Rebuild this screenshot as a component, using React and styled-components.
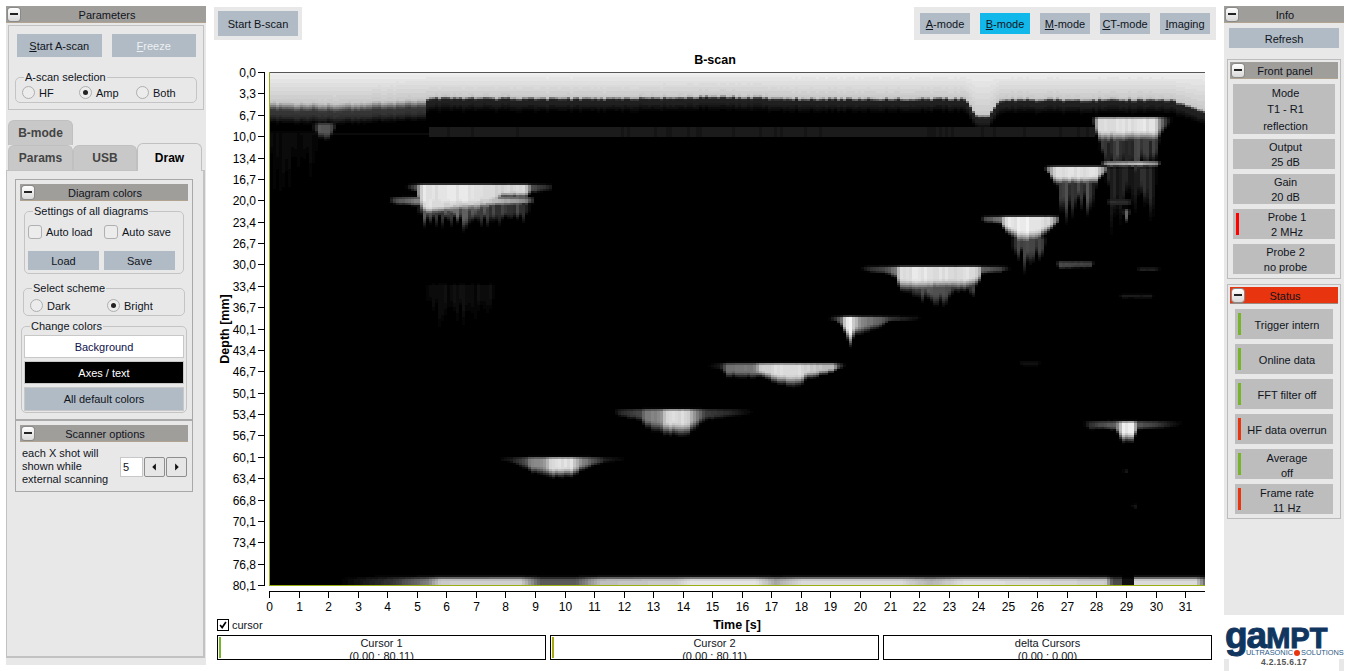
import React from 'react';
import styled, { createGlobalStyle } from 'styled-components';

// ---- plot geometry, in page pixels (the svg viewBox uses the same numbers)
const PLOT = { left: 269, right: 1205, top: 72, bottom: 585 };
const X_STEP = 29.55;
const DEPTHS = ['0,0', '3,3', '6,7', '10,0', '13,4', '16,7', '20,0', '23,4', '26,7', '30,0', '33,4', '36,7', '40,1', '43,4', '46,7', '50,1', '53,4', '56,7', '60,1', '63,4', '66,8', '70,1', '73,4', '76,8', '80,1'];
const SECONDS = Array.from({ length: 32 }, (_, i) => i);

// ---- echoes of the b-scan: top edge, then [x, brightness, depth] along the echo, rough = streaky columns
const ECHOES = [
  { top: 185, pts: [[405, 0, 2], [415, 0.3, 5], [422, 0.92, 24], [470, 0.92, 24], [495, 0.85, 18], [500, 0.85, 10], [525, 0.85, 10], [532, 0.3, 6], [550, 0.12, 4], [552, 0, 2]] },
  { top: 198, pts: [[388, 0, 3], [395, 0.3, 5], [420, 0.55, 6], [425, 0.9, 14], [490, 0.8, 6], [525, 0.55, 5], [532, 0.2, 4], [535, 0, 2]] },
  { top: 205, rough: 0.7, pts: [[415, 0, 5], [425, 0.4, 14], [460, 0.45, 15], [495, 0.3, 13], [525, 0.3, 10], [530, 0, 5]] },
  { top: 458, pts: [[498, 0, 2], [510, 0.1, 3], [525, 0.3, 8], [530, 0.55, 11], [545, 0.6, 14], [550, 0.9, 15], [572, 0.9, 15], [580, 0.6, 10], [592, 0.35, 6], [605, 0.12, 3], [625, 0, 2]] },
  { top: 410, pts: [[613, 0, 3], [620, 0.15, 5], [640, 0.3, 8], [645, 0.5, 14], [660, 0.55, 18], [665, 0.88, 20], [688, 0.88, 20], [695, 0.55, 14], [705, 0.25, 8], [730, 0.15, 5], [753, 0, 3]] },
  { top: 364, pts: [[707, 0, 3], [720, 0.1, 4], [727, 0.45, 10], [755, 0.5, 11], [760, 0.85, 9], [778, 0.9, 16], [800, 0.9, 18], [806, 0.85, 12], [833, 0.75, 6], [838, 0.3, 4], [845, 0, 2]] },
  { top: 317, pts: [[828, 0, 2], [835, 0.2, 3], [842, 0.5, 8], [845, 0.95, 14], [850, 1, 24], [854, 0.8, 14], [860, 0.55, 13], [880, 0.4, 8], [890, 0.2, 3], [917, 0.05, 2], [920, 0, 1]] },
  { top: 267, pts: [[860, 0, 2], [870, 0.2, 4], [885, 0.3, 5], [895, 0.5, 8], [900, 0.92, 20], [970, 0.9, 18], [978, 0.85, 14], [982, 0.4, 5], [1000, 0.25, 4], [1010, 0, 2]] },
  { top: 282, rough: 0.4, pts: [[905, 0, 5], [915, 0.3, 12], [935, 0.4, 16], [945, 0.4, 16], [955, 0.25, 8], [968, 0.15, 6], [972, 0.35, 12], [976, 0, 4]] },
  { top: 118, pts: [[1092, 0, 3], [1098, 0.9, 20], [1155, 0.92, 20], [1160, 0.5, 14], [1168, 0.1, 6], [1172, 0, 2]] },
  { top: 138, rough: 0.9, pts: [[1098, 0, 5], [1103, 0.35, 24], [1155, 0.35, 24], [1160, 0, 4]] },
  { top: 162, pts: [[1100, 0, 2], [1106, 0.6, 3], [1125, 0.7, 3], [1140, 0.8, 3], [1157, 0.55, 3], [1160, 0, 2]] },
  { top: 168, rough: 1, pts: [[1104, 0, 6], [1110, 0.22, 40], [1150, 0.22, 40], [1158, 0, 5]] },
  { top: 167, pts: [[1044, 0, 2], [1048, 0.5, 5], [1055, 0.9, 14], [1095, 0.92, 14], [1104, 0.6, 5], [1107, 0, 3]] },
  { top: 180, rough: 0.8, pts: [[1055, 0, 3], [1060, 0.35, 24], [1090, 0.35, 24], [1098, 0, 3]] },
  { top: 217, pts: [[980, 0, 2], [985, 0.3, 4], [1000, 0.5, 5], [1005, 0.9, 12], [1020, 0.95, 22], [1035, 0.95, 22], [1050, 0.85, 10], [1057, 0.4, 5], [1060, 0, 2]] },
  { top: 238, rough: 0.8, pts: [[1010, 0, 3], [1015, 0.35, 20], [1040, 0.35, 20], [1048, 0, 3]] },
  { top: 262, pts: [[1055, 0, 2], [1060, 0.3, 5], [1090, 0.25, 4], [1094, 0, 2]] },
  { top: 210, pts: [[1122, 0, 2], [1126, 0.4, 10], [1130, 0, 2]] },
  { top: 200, pts: [[1105, 0, 2], [1110, 0.18, 4], [1128, 0.18, 4], [1132, 0, 2]] },
  { top: 268, pts: [[1135, 0, 1], [1140, 0.12, 2], [1155, 0.12, 2], [1160, 0, 1]] },
  { top: 295, pts: [[1118, 0, 1], [1122, 0.1, 2], [1150, 0.1, 2], [1154, 0, 1]] },
  { top: 362, pts: [[1018, 0, 1], [1022, 0.07, 3], [1036, 0.07, 3], [1040, 0, 1]] },
  { top: 505, pts: [[1131, 0, 1], [1134, 0.12, 3], [1138, 0, 1]] },
  { top: 470, pts: [[1122, 0, 1], [1126, 0.08, 2], [1129, 0, 1]] },
  { top: 422, pts: [[1083, 0, 3], [1090, 0.2, 6], [1100, 0.3, 5], [1115, 0.4, 6], [1122, 0.95, 16], [1132, 0.95, 16], [1138, 0.35, 6], [1155, 0.25, 5], [1170, 0.1, 4], [1183, 0, 2]] },
  { top: 285, rough: 0.9, pts: [[425, 0, 5], [430, 0.07, 24], [490, 0.06, 24], [495, 0, 5]] },
  { top: 132, rough: 0.9, pts: [[270, 0.045, 38], [315, 0.045, 38], [320, 0, 5]] },
  { top: 124, rough: 0.6, pts: [[312, 0, 5], [318, 0.35, 14], [325, 0.42, 18], [332, 0.3, 8], [336, 0, 5]] },
];

const TOP_EDGE = [[269, 100], [345, 101], [380, 99], [425, 97], [430, 95], [600, 96], [720, 94], [800, 96], [965, 96], [975, 113], [988, 113], [1000, 97], [1170, 97], [1190, 104], [1205, 110]];
const BOTTOM_BAND = [[340, 0], [390, 0.2], [427, 0.5], [440, 0.8], [520, 0.82], [540, 0.35], [575, 0.35], [600, 0.75], [677, 0.8], [690, 0.9], [755, 0.9], [775, 0.65], [800, 0.85], [900, 0.85], [930, 0.7], [965, 0.88], [1040, 0.85], [1105, 0.8], [1112, 0.3], [1121, 0.3], [1123, 0.06], [1132, 0.06], [1135, 0.85], [1195, 0.85], [1205, 0.4]];

const hash = (n) => {
  const s = Math.sin(n * 12.9898) * 43758.5453;
  return s - Math.floor(s);
};

const smooth = (a, b, v) => {
  const t = Math.min(1, Math.max(0, (v - a) / (b - a)));
  return t * t * (3 - 2 * t);
};

// piecewise linear lookup, returns the interpolated row after the x value
function lookup(pts, x) {
  if (x < pts[0][0] || x > pts[pts.length - 1][0]) return null;
  for (let i = 1; i < pts.length; i++) {
    if (x <= pts[i][0]) {
      const k = (x - pts[i - 1][0]) / (pts[i][0] - pts[i - 1][0]);
      return pts[i].map((v, j) => pts[i - 1][j] + (v - pts[i - 1][j]) * k);
    }
  }
  return null;
}

function echoValue(echo, index, x, y, col) {
  const row = lookup(echo.pts, x);
  if (!row) return 0;
  const rough = echo.rough ?? 0.1;
  const amp = row[1] * (1 - rough * 0.7 * hash(col + index * 31));
  const depth = row[2] * (1 + rough * 1.2 * (hash(col * 3 + index) - 0.5));
  const t = y - echo.top;
  if (t < 0) return amp * Math.exp(-((t / 1.6) ** 2));
  return amp * (1 - smooth(0.55, 1.35, t / depth));
}

function bandValue(x, y, col) {
  const edge = lookup(TOP_EDGE, x)[1] + (hash(col + 900) - 0.5) * 2;
  const left = x < 427;
  const dark = left ? 0.2 : 0.13;
  const span = left ? 11 : 4;
  let v = 0;
  if (y < edge) {
    v = 0.93 - (0.14 * (y - 73)) / (edge - 73);
  } else {
    const u = y - edge;
    if (u < span) v = 0.79 + (dark - 0.79) * smooth(0, span, u);
    else v = dark * (1 - smooth(span + 2, span + 13, u));
  }
  if (y > 126 && y < 137 && x > 427 && x < 1095) v = Math.max(v, 0.09 + hash(col + 400) * 0.02);
  if (y > 131 && y < 135 && x > 300 && x <= 427) v = Math.max(v, 0.05);
  const low = lookup(BOTTOM_BAND, x);
  if (low) v = Math.max(v, low[1] * smooth(574, 580, y));
  return v;
}

// one path per grey level, columns 3px wide as in the scan
function buildHeat() {
  const levels = {};
  for (let col = 0, x = 270; x < PLOT.right; col++, x += 3) {
    let runStart = 0;
    let runLevel = -1;
    for (let y = 73; y <= 587; y += 2) {
      let v = y < 585 ? bandValue(x + 1, y, col) : -1;
      if (v >= 0) {
        ECHOES.forEach((echo, i) => {
          v = Math.max(v, echoValue(echo, i, x + 1, y, col));
        });
      }
      const level = v < 0 ? -1 : Math.round(v * 48);
      if (level !== runLevel) {
        if (runLevel > 0) {
          levels[runLevel] = (levels[runLevel] || '') + `M${x} ${runStart}h3v${y - runStart}h-3z`;
        }
        runStart = y;
        runLevel = level;
      }
    }
  }
  return Object.entries(levels).map(([level, d]) => {
    const g = Math.min(255, Math.round((level / 48) * 255));
    return { d, fill: `rgb(${g},${g},${g})` };
  });
}

const HEAT = buildHeat();

const BScan = () => (
  <ChartSvg viewBox="214 68 1002 548">
    <defs>
      <clipPath id="plot">
        <rect x={PLOT.left} y={PLOT.top} width={PLOT.right - PLOT.left} height={PLOT.bottom - PLOT.top} />
      </clipPath>
    </defs>

    <g clipPath="url(#plot)" shapeRendering="crispEdges">
      <rect x={PLOT.left} y={PLOT.top} width={936} height={513} fill="#000" />
      {HEAT.map((cell) => <path key={cell.fill} d={cell.d} fill={cell.fill} />)}
    </g>

    <line x1={PLOT.left} x2={PLOT.right} y1={72.5} y2={72.5} stroke="#555" />
    <line x1={269.5} x2={269.5} y1={PLOT.top} y2={PLOT.bottom} stroke="#9aae14" />
    <line x1={PLOT.left} x2={PLOT.right} y1={585.5} y2={585.5} stroke="#9aae14" />

    <line x1={264.5} x2={264.5} y1={72} y2={586} stroke="#000" />
    {DEPTHS.map((label, i) => {
      const y = Math.round(PLOT.top + i * 21.375) + 0.5;
      return (
        <g key={label}>
          <line x1={258} x2={264} y1={y} y2={y} stroke="#000" />
          <AxisText x={256} y={y + 4} textAnchor="end">{label}</AxisText>
        </g>
      );
    })}

    <line x1={PLOT.left} x2={PLOT.right} y1={591.5} y2={591.5} stroke="#000" />
    {SECONDS.map((s) => {
      const x = Math.round(PLOT.left + s * X_STEP) + 0.5;
      return (
        <g key={s}>
          <line x1={x} x2={x} y1={592} y2={598} stroke="#000" />
          <AxisText x={x} y={611} textAnchor="middle">{s}</AxisText>
        </g>
      );
    })}

    <AxisTitle x={0} y={0} textAnchor="middle" transform="translate(229 329) rotate(-90)">Depth [mm]</AxisTitle>
  </ChartSvg>
);

const Header = ({ title, $status }) => (
  <HeaderBar $status={$status}>
    <Collapse />
    <span>{title}</span>
  </HeaderBar>
);

const Radio = ({ label, checked, width }) => (
  <RadioLabel $width={width}>
    <RadioDot $checked={checked} />
    {label}
  </RadioLabel>
);

const FRONT_PANEL = [
  { lines: ['Mode', 'T1 - R1', 'reflection'], tall: true },
  { lines: ['Output', '25 dB'] },
  { lines: ['Gain', '20 dB'] },
  { lines: ['Probe 1', '2 MHz'], led: '#ff0000' },
  { lines: ['Probe 2', 'no probe'] },
];

const GREEN = '#78b42a';
const RED = '#e8340f';
const STATUS = [
  { lines: ['Trigger intern'], led: GREEN },
  { lines: ['Online data'], led: GREEN },
  { lines: ['FFT filter off'], led: GREEN },
  { lines: ['HF data overrun'], led: RED },
  { lines: ['Average', 'off'], led: GREEN },
  { lines: ['Frame rate', '11 Hz'], led: RED },
];

const InfoRow = ({ lines, led, tall, shift }) => (
  <InfoItem $tall={tall}>
    {led && <Led $color={led} />}
    <InfoText $tall={tall} $shift={shift}>
      {lines.map((l) => <div key={l}>{l}</div>)}
    </InfoText>
  </InfoItem>
);

const App = () => (
  <Page>
    <GlobalStyle />

    {/* ---- left column */}
    <LeftColumn>
      <Header title="Parameters" />
      <ScanBox>
        <ButtonRow>
          <FlatButton $w={85} $h={23}><u>S</u>tart A-scan</FlatButton>
          <FlatButton $w={85} $h={23} $disabled><u>F</u>reeze</FlatButton>
        </ButtonRow>
        <Group $top={13} $h={33} $mx={-1}>
          <legend>A-scan selection</legend>
          <Options $pad={3} $top={2}>
            <Radio label="HF" width={57} />
            <Radio label="Amp" checked width={57} />
            <Radio label="Both" />
          </Options>
        </Group>
      </ScanBox>

      <Tabs>
        <TabRow>
          <Tab $w={65}>B-mode</Tab>
        </TabRow>
        <TabRow>
          <Tab $w={65}>Params</Tab>
          <Tab $w={64}>USB</Tab>
          <Tab $w={65} $active>Draw</Tab>
        </TabRow>
      </Tabs>

      <TabPane>
        <DrawBox>
          <Header title="Diagram colors" />
          <Group $top={3} $h={70} $mx={4}>
            <legend>Settings of all diagrams</legend>
            <Options>
              <CheckLabel $width={76}><CheckSquare />Auto load</CheckLabel>
              <CheckLabel><CheckSquare />Auto save</CheckLabel>
            </Options>
            <ButtonRow $gap={5} $pad={0} $top={12}>
              <FlatButton $w={71} $h={19}>Load</FlatButton>
              <FlatButton $w={71} $h={19}>Save</FlatButton>
            </ButtonRow>
          </Group>

          <Group $top={7} $h={35} $mx={3}>
            <legend>Select scheme</legend>
            <Options $pad={3} $top={4}>
              <Radio label="Dark" width={77} />
              <Radio label="Bright" checked />
            </Options>
          </Group>

          <Group $top={3} $h={94} $mx={1}>
            <legend>Change colors</legend>
            <ColorStack>
              <ColorButton $bg="#fff" $fg="#10104a">Background</ColorButton>
              <ColorButton $bg="#000" $fg="#fff">Axes / text</ColorButton>
              <ColorButton $bg="#b0bbc5" $fg="#10141c" $h={24}>All default colors</ColorButton>
            </ColorStack>
          </Group>

          <Divider />
          <Header title="Scanner options" />
          <ScannerRow>
            <ScannerText>each X shot will<br />shown while<br />external scanning</ScannerText>
            <NumberField>5</NumberField>
            <Stepper>
              <StepButton viewBox="0 0 21 20"><polygon points="12,6 12,14 8,10" fill="#111" /></StepButton>
              <StepButton viewBox="0 0 21 20"><polygon points="9,6 9,14 13,10" fill="#111" /></StepButton>
            </Stepper>
          </ScannerRow>
        </DrawBox>
      </TabPane>
    </LeftColumn>

    {/* ---- middle column */}
    <MiddleColumn>
      <TopBar>
        <StartPanel>
          <FlatButton $w={80} $h={25}>Start B-scan</FlatButton>
        </StartPanel>
        <ModePanel>
          <ModeButton><u>A</u>-mode</ModeButton>
          <ModeButton $active><u>B</u>-mode</ModeButton>
          <ModeButton><u>M</u>-mode</ModeButton>
          <ModeButton><u>C</u>T-mode</ModeButton>
          <ModeButton><u>I</u>maging</ModeButton>
        </ModePanel>
      </TopBar>

      <ChartTitle>B-scan</ChartTitle>
      <BScan />

      <UnderChart>
        <CursorCheck>
          <TickBox viewBox="0 0 12 12"><path d="M2.5 6 L5 9 L9.5 2.5" fill="none" stroke="#000" strokeWidth="2" /></TickBox>
          cursor
        </CursorCheck>
        <TimeTitle>Time [s]</TimeTitle>
      </UnderChart>

      <CursorRow>
        <CursorBox><CursorLed $color={GREEN} />Cursor 1<br />(0,00 : 80,11)</CursorBox>
        <CursorBox><CursorLed $color="#a8a810" />Cursor 2<br />(0,00 : 80,11)</CursorBox>
        <CursorBox>delta Cursors<br />(0,00 : 0,00)</CursorBox>
      </CursorRow>
    </MiddleColumn>

    {/* ---- right column */}
    <RightColumn>
      <InfoPanel>
        <Header title="Info" />
        <RefreshRow>
          <FlatButton $w={110} $h={20}>Refresh</FlatButton>
        </RefreshRow>
        <InfoBox $top={11}>
          <Header title="Front panel" />
          <InfoList $pad={3}>
            {FRONT_PANEL.map((item) => <InfoRow key={item.lines[0]} {...item} />)}
          </InfoList>
        </InfoBox>
        <InfoBox $top={5}>
          <Header title="Status" $status />
          <InfoList $pad={5}>
            {STATUS.map((item) => <InfoRow key={item.lines[0]} {...item} shift />)}
          </InfoList>
        </InfoBox>
      </InfoPanel>

      <Logo>
        <LogoMark><LogoBig>ga</LogoBig>MPT</LogoMark>
        <LogoSub>ULTRASONIC<LogoDot />SOLUTIONS</LogoSub>
      </Logo>
      <Version>4.2.15.6.17</Version>
    </RightColumn>
  </Page>
);

export default App;

// ------ UI component definition
const GlobalStyle = createGlobalStyle`
  html, body {
    margin: 0;
    padding: 0;
    background: #fff;
    overflow: hidden;
  }
  * {
    box-sizing: border-box;
  }
`;

const Page = styled.div`
  display: flex;
  width: 1350px;
  height: 671px;
  padding-top: 6px;
  overflow: hidden;
  font-family: "Liberation Sans", Arial, sans-serif;
  font-size: 11px;
  color: #10141c;
`;

const LeftColumn = styled.div`
  display: flex;
  flex-direction: column;
  width: 200px;
  height: 659px;
  margin-left: 6px;
  background: #e8e8e8;
`;

const HeaderBar = styled.div`
  display: flex;
  align-items: center;
  flex-shrink: 0;
  height: 17px;
  padding-left: 2px;
  background: ${(p) => (p.$status ? '#e8340f' : '#a09e9b')};
  border-bottom: 1px solid ${(p) => (p.$status ? '#9a8a80' : '#b0a390')};

  span {
    flex: 1;
    padding: 1px 12px 0 0;
    text-align: center;
  }
`;

const Collapse = styled.i`
  display: flex;
  align-items: center;
  justify-content: center;
  width: 12px;
  height: 13px;
  border-radius: 3px;
  background: linear-gradient(#fff, #d8d8d8);
  box-shadow: 0 0 0 1px #8a8a8a;

  &::after {
    content: '';
    width: 8px;
    height: 2px;
    background: #222;
  }
`;

const ScanBox = styled.div`
  height: 85px;
  margin: 2px 2px 0;
  padding: 8px 7px;
  border: 1px solid #c2c2c2;
`;

const ButtonRow = styled.div`
  display: flex;
  gap: ${(p) => p.$gap ?? 10}px;
  padding-left: ${(p) => p.$pad ?? 1}px;
  margin-top: ${(p) => p.$top ?? 0}px;
`;

const FlatButton = styled.div`
  display: flex;
  align-items: center;
  justify-content: center;
  width: ${(p) => p.$w}px;
  height: ${(p) => p.$h}px;
  background: #b0bbc5;
  color: ${(p) => (p.$disabled ? '#eef0f2' : '#10141c')};

  u {
    text-underline-offset: 1px;
  }
`;

const Group = styled.fieldset`
  height: ${(p) => p.$h}px;
  min-width: 0;
  margin: ${(p) => p.$top}px ${(p) => p.$mx}px 0;
  padding: 0 3px;
  border: 1px solid #c4c4c4;
  border-radius: 5px;

  legend {
    height: 14px;
    padding: 0 1px;
    margin-left: 5px;
    line-height: 14px;
  }
`;

const Options = styled.div`
  display: flex;
  align-items: center;
  padding-left: ${(p) => p.$pad ?? 0}px;
  margin-top: ${(p) => p.$top ?? 3}px;
`;

const RadioLabel = styled.div`
  display: flex;
  align-items: center;
  gap: 4px;
  width: ${(p) => (p.$width ? `${p.$width}px` : 'auto')};
`;

const RadioDot = styled.i`
  display: flex;
  align-items: center;
  justify-content: center;
  width: 13px;
  height: 13px;
  border-radius: 50%;
  border: 1px solid #aeaeae;
  background: #ececec;

  &::after {
    content: '';
    display: ${(p) => (p.$checked ? 'block' : 'none')};
    width: 5px;
    height: 5px;
    border-radius: 50%;
    background: #222;
  }
`;

const CheckLabel = styled.div`
  display: flex;
  align-items: center;
  gap: 4px;
  margin-top: 4px;
  width: ${(p) => (p.$width ? `${p.$width}px` : 'auto')};
`;

const CheckSquare = styled.i`
  width: 14px;
  height: 14px;
  border: 1px solid #b0b0b0;
  border-radius: 3px;
  background: #ececec;
`;

const Tabs = styled.div`
  display: flex;
  flex-direction: column;
  margin: 10px 0 0 2px;
  font-size: 12px;
  font-weight: bold;
`;

const TabRow = styled.div`
  display: flex;
  height: 25px;
  align-items: flex-end;
`;

const Tab = styled.div`
  display: flex;
  align-items: center;
  justify-content: center;
  position: relative;
  z-index: ${(p) => (p.$active ? 1 : 0)};
  width: ${(p) => p.$w}px;
  height: ${(p) => (p.$active ? 28 : 25)}px;
  margin-bottom: ${(p) => (p.$active ? -1 : 0)}px;
  background: ${(p) => (p.$active ? '#e8e8e8' : '#c8c8c8')};
  color: ${(p) => (p.$active ? '#000' : '#444')};
  border: 1px solid #c0c0c0;
  border-bottom: none;
  border-radius: 6px 6px 0 0;
`;

const TabPane = styled.div`
  width: 199px;
  height: 488px;
  padding: 8px;
  background: #e8e8e8;
  border: 1px solid #c2c2c2;
  border-bottom-width: 2px;
  border-right-width: 2px;
`;

const DrawBox = styled.div`
  width: 178px;
  height: 313px;
  padding: 4px;
  border: 1px solid #a8a8a8;
`;

const ColorStack = styled.div`
  display: flex;
  flex-direction: column;
  gap: 3px;
  margin: 2px -1px 0;
`;

const ColorButton = styled.div`
  display: flex;
  align-items: center;
  justify-content: center;
  height: ${(p) => p.$h ?? 23}px;
  background: ${(p) => p.$bg};
  color: ${(p) => p.$fg};
  border: 1px solid #c8c8c8;
`;

const Divider = styled.div`
  height: 2px;
  margin: 6px -4px 4px;
  background: #aaa;
`;

const ScannerRow = styled.div`
  display: flex;
  align-items: center;
  margin-top: 5px;
`;

const ScannerText = styled.div`
  width: 100px;
  flex-shrink: 0;
  padding-left: 2px;
  line-height: 13px;
  white-space: nowrap;
`;

const NumberField = styled.div`
  width: 23px;
  height: 20px;
  padding-left: 2px;
  line-height: 19px;
  background: #fff;
  border: 1px solid #c8c8c8;
`;

const Stepper = styled.div`
  display: flex;
  gap: 1px;
  margin-left: 1px;
`;

const StepButton = styled.svg`
  width: 21px;
  height: 20px;
  background: #e6e6e6;
  border: 1px solid #8e8e8e;
  border-radius: 2px;
`;

const MiddleColumn = styled.div`
  display: flex;
  flex-direction: column;
  width: 1002px;
  margin-left: 8px;
  padding-top: 1px;
`;

const TopBar = styled.div`
  display: flex;
  justify-content: space-between;
  height: 33px;
`;

const StartPanel = styled.div`
  width: 88px;
  padding: 4px;
  background: #e8e8e8;
`;

const ModePanel = styled.div`
  display: flex;
  gap: 10px;
  padding: 6px;
  background: #e8e8e8;
`;

const ModeButton = styled.div`
  display: flex;
  align-items: center;
  justify-content: center;
  width: 50px;
  height: 21px;
  padding-top: ${(p) => (p.$active ? 1 : 0)}px;
  background: ${(p) => (p.$active ? '#12b8ea' : '#b0bbc5')};
  white-space: nowrap;
`;

const ChartTitle = styled.div`
  height: 18px;
  margin-top: 10px;
  padding-top: 1px;
  line-height: 18px;
  text-align: center;
  font-size: 12.5px;
  font-weight: bold;
  color: #000;
`;

const ChartSvg = styled.svg`
  display: block;
  flex-shrink: 0;
  width: 1002px;
  height: 548px;
`;

const AxisText = styled.text`
  font-family: "Liberation Sans", Arial, sans-serif;
  font-size: 12px;
  fill: #000;
`;

const AxisTitle = styled(AxisText)`
  font-size: 12.5px;
  font-weight: bold;
`;

const UnderChart = styled.div`
  display: grid;
  grid-template-columns: 55px 936px;
  align-items: center;
  height: 18px;
`;

const CursorCheck = styled.div`
  display: flex;
  align-items: center;
  gap: 3px;
  padding-left: 3px;
`;

const TickBox = styled.svg`
  width: 12px;
  height: 12px;
  flex-shrink: 0;
  border: 1px solid #000;
  background: #fff;
`;

const TimeTitle = styled.div`
  text-align: center;
  font-size: 12.5px;
  font-weight: bold;
  color: #000;
`;

const CursorRow = styled.div`
  display: flex;
  gap: 4px;
  margin-top: 1px;
  padding-left: 3px;
`;

const CursorBox = styled.div`
  position: relative;
  width: 329px;
  height: 25px;
  padding-top: 1px;
  border: 1px solid #000;
  line-height: 13px;
  text-align: center;
  overflow: hidden;
`;

const CursorLed = styled.i`
  position: absolute;
  left: 1px;
  top: 1px;
  width: 2px;
  height: 21px;
  background: ${(p) => p.$color};
`;

const RightColumn = styled.div`
  display: flex;
  flex-direction: column;
  width: 120px;
  margin-left: 8px;
`;

const InfoPanel = styled.div`
  height: 609px;
  background: #e8e8e8;
`;

const RefreshRow = styled.div`
  padding: 5px 5px 0;

  & > div {
    padding-top: 1px;
  }
`;

const InfoBox = styled.div`
  width: 114px;
  margin: ${(p) => p.$top}px 0 0 3px;
  padding: 2px;
  border: 1px solid #bcbcbc;
`;

const InfoList = styled.div`
  display: flex;
  flex-direction: column;
  gap: 5px;
  padding: 5px ${(p) => p.$pad}px 2px;
`;

const InfoItem = styled.div`
  display: flex;
  align-items: center;
  height: ${(p) => (p.$tall ? 50 : 30)}px;
  padding-left: 3px;
  background: #bdbdbd;
`;

const Led = styled.i`
  flex-shrink: 0;
  width: 3px;
  height: 22px;
  background: ${(p) => p.$color};
`;

const InfoText = styled.div`
  flex: 1;
  padding-top: ${(p) => (p.$shift ? 3 : 1)}px;
  text-align: center;
  line-height: ${(p) => (p.$tall ? 16.5 : 15)}px;
  white-space: nowrap;
`;

const Logo = styled.div`
  display: flex;
  flex-direction: column;
  align-items: flex-start;
  height: 44px;
  margin: 9px -4px 0 1px;
  overflow: hidden;
`;

const LogoMark = styled.div`
  height: 24px;
  line-height: 24px;
  font-size: 29px;
  font-weight: bold;
  color: #10365f;
  -webkit-text-stroke: 1px #10365f;
  white-space: nowrap;
`;

const LogoBig = styled.span`
  font-size: 37px;
  letter-spacing: -1px;
`;

const LogoSub = styled.div`
  display: flex;
  align-items: center;
  gap: 1px;
  height: 9px;
  padding-left: 21px;
  font-size: 7.4px;
  color: #2d5a86;
  white-space: nowrap;
`;

const LogoDot = styled.i`
  width: 6px;
  height: 6px;
  border-radius: 50%;
  background: #e8340f;
`;

const Version = styled.div`
  height: 12px;
  margin-top: -9px;
  position: relative;
  border-left: 5px solid #e8e8e8;
  border-right: 5px solid #e8e8e8;
  line-height: 7px;
  text-align: center;
  font-size: 8.5px;
  font-weight: bold;
  letter-spacing: 0.3px;
  color: #555;
`;
